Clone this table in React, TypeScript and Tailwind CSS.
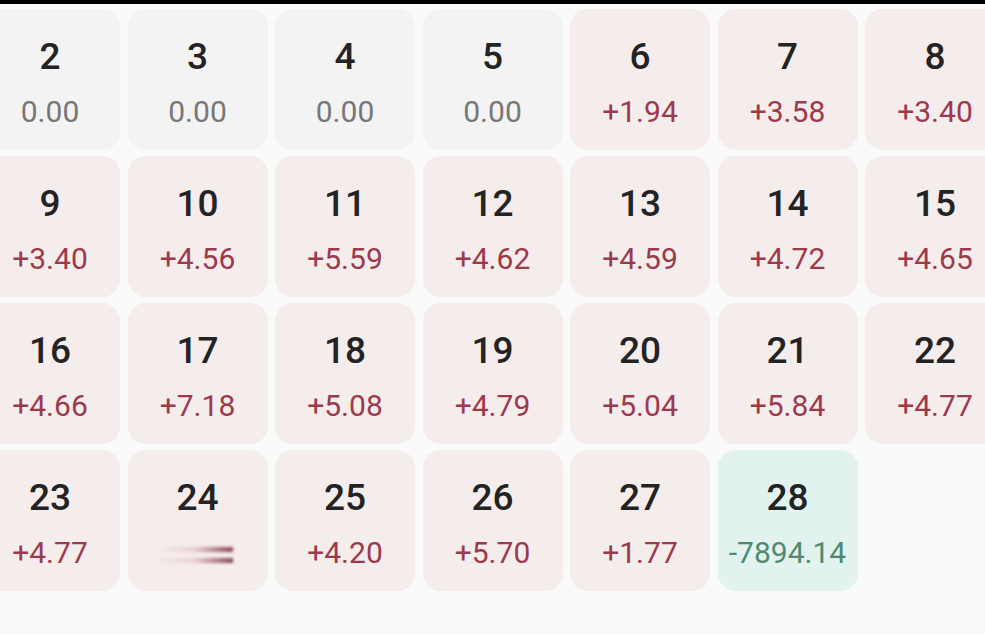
const days: { d: number; v: string; tone: 'gray' | 'red' | 'green' | 'blur' }[] = [
  { d: 2, v: '0.00', tone: 'gray' },
  { d: 3, v: '0.00', tone: 'gray' },
  { d: 4, v: '0.00', tone: 'gray' },
  { d: 5, v: '0.00', tone: 'gray' },
  { d: 6, v: '+1.94', tone: 'red' },
  { d: 7, v: '+3.58', tone: 'red' },
  { d: 8, v: '+3.40', tone: 'red' },
  { d: 9, v: '+3.40', tone: 'red' },
  { d: 10, v: '+4.56', tone: 'red' },
  { d: 11, v: '+5.59', tone: 'red' },
  { d: 12, v: '+4.62', tone: 'red' },
  { d: 13, v: '+4.59', tone: 'red' },
  { d: 14, v: '+4.72', tone: 'red' },
  { d: 15, v: '+4.65', tone: 'red' },
  { d: 16, v: '+4.66', tone: 'red' },
  { d: 17, v: '+7.18', tone: 'red' },
  { d: 18, v: '+5.08', tone: 'red' },
  { d: 19, v: '+4.79', tone: 'red' },
  { d: 20, v: '+5.04', tone: 'red' },
  { d: 21, v: '+5.84', tone: 'red' },
  { d: 22, v: '+4.77', tone: 'red' },
  { d: 23, v: '+4.77', tone: 'red' },
  { d: 24, v: '', tone: 'blur' },
  { d: 25, v: '+4.20', tone: 'red' },
  { d: 26, v: '+5.70', tone: 'red' },
  { d: 27, v: '+1.77', tone: 'red' },
  { d: 28, v: '-7894.14', tone: 'green' },
];

const bg = {
  gray: 'bg-[#f3f3f3]',
  red: 'bg-[#f5ecec]',
  blur: 'bg-[#f5ecec]',
  green: 'bg-[#e2f2ef]',
};

const fg = {
  gray: 'text-[#777777]',
  red: 'text-[#9c3a4c]',
  blur: 'text-[#9c3a4c]',
  green: 'text-[#4f8a70]',
};

const DayCell = ({ d, v, tone }: (typeof days)[number]) => (
  <div className={`h-[141px] rounded-[18px] ${bg[tone]} flex flex-col items-center pt-[29px]`}>
    <span className="text-[37px] leading-none font-medium text-[#232323]">{d}</span>
    {tone === 'blur' ? (
      <div className="mt-[31px] -ml-[6px] flex flex-col gap-[6px]">
        <div className="h-[5px] w-[76px] bg-gradient-to-r from-transparent via-[#e6cfd2] to-[#8a4652] blur-[1.5px]" />
        <div className="h-[5px] w-[76px] bg-gradient-to-r from-transparent via-[#e6cfd2] to-[#8a4652] blur-[1.5px]" />
      </div>
    ) : (
      <span className={`mt-[22px] text-[30px] leading-none ${fg[tone]}`}>{v}</span>
    )}
  </div>
);

export default function App() {
  return (
    <div
      className="w-[985px] h-[634px] overflow-hidden bg-[#fafafa]"
      style={{ fontFamily: 'Roboto, "Noto Sans", sans-serif' }}
    >
      <div className="h-[4px] bg-black" />
      <div className="pt-[5px] -ml-[20px] grid grid-cols-[repeat(7,140px)] gap-x-[7.5px] gap-y-[6px]">
        {days.map((x) => (
          <DayCell key={x.d} {...x} />
        ))}
      </div>
    </div>
  );
}
